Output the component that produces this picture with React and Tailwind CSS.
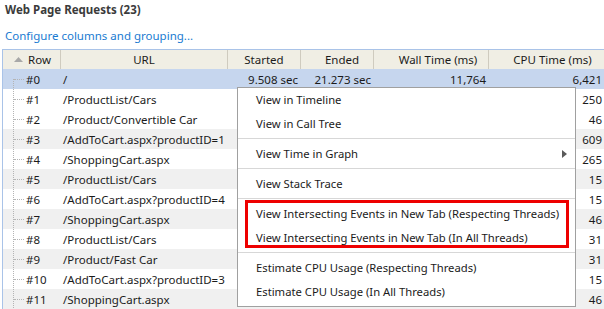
import React from "react";

const rows = [
  { n: "#0", url: "/", started: "9.508 sec", ended: "21.273 sec", wall: "11,764", cpu: "6,421" },
  { n: "#1", url: "/ProductList/Cars", cpu: "250" },
  { n: "#2", url: "/Product/Convertible Car", cpu: "46" },
  { n: "#3", url: "/AddToCart.aspx?productID=1", cpu: "609" },
  { n: "#4", url: "/ShoppingCart.aspx", cpu: "265" },
  { n: "#5", url: "/ProductList/Cars", cpu: "15" },
  { n: "#6", url: "/AddToCart.aspx?productID=4", cpu: "15" },
  { n: "#7", url: "/ShoppingCart.aspx", cpu: "46" },
  { n: "#8", url: "/ProductList/Cars", cpu: "31" },
  { n: "#9", url: "/Product/Fast Car", cpu: "31" },
  { n: "#10", url: "/AddToCart.aspx?productID=3", cpu: "15" },
  { n: "#11", url: "/ShoppingCart.aspx", cpu: "46" },
];

const cols = "grid grid-cols-[58px_167px_73px_73px_115px_115px]";

function MenuItem({ children, arrow }) {
  return (
    <div className="h-[24px] flex items-center pl-[18px] pr-[10px] relative whitespace-nowrap">
      <span>{children}</span>
      {arrow && (
        <svg className="absolute left-[324px] top-[8px]" width="5" height="8" viewBox="0 0 5 8">
          <path d="M0 0 L5 4 L0 8 Z" fill="#5a5a5a" />
        </svg>
      )}
    </div>
  );
}

function Sep() {
  return <div className="h-[6px] pt-[2px]"><div className="h-px bg-[#d7d7d7]" /></div>;
}

export default function App() {
  return (
    <div
      className="relative w-[604px] h-[309px] overflow-hidden bg-white text-[11.5px] text-[#1b1b1b]"
      style={{ fontFamily: '"Segoe UI", "Noto Sans", sans-serif' }}
    >
      <div className="h-[20px] leading-[20px] pl-[5px] font-bold text-[#3b3b3b]">Web Page Requests (23)</div>
      <div className="mt-[6px] h-[20px] leading-[20px] pl-[5px] text-[#1a7bd1]">Configure columns and grouping...</div>
      <div className="mt-[3px] ml-[2px] border-l border-t border-[#a9c3e8]">
        <div className={`${cols} h-[19px] bg-[#f0eee4] leading-[19px]`}>
          <div className="border-r border-[#cfcbbf] flex items-center pl-[11px]">
            <svg width="9" height="5" viewBox="0 0 9 5" className="mr-[5px]">
              <path d="M0 5 L4.5 0 L9 5 Z" fill="#a8a8a8" />
            </svg>
            <span>Row</span>
          </div>
          <div className="border-r border-[#cfcbbf] text-center">URL</div>
          <div className="border-r border-[#cfcbbf] text-center">Started</div>
          <div className="border-r border-[#cfcbbf] text-center pl-[10px]">Ended</div>
          <div className="border-r border-[#cfcbbf] text-center pl-[14px]">Wall Time (ms)</div>
          <div className="text-center pl-[12px]">CPU Time (ms)</div>
        </div>
        {rows.map((r, i) => {
          const bg = i === 0 ? "bg-[#c6d6ee]" : i % 2 === 1 && i > 1 ? "bg-[#f0f0f0]" : "bg-white";
          return (
            <div key={r.n} className={`${cols} h-[20px] leading-[21px] ${bg}`}>
              <div className="relative pl-[23px]">
                <span
                  className={`absolute left-[10px] ${i === 0 ? "top-[10px]" : "top-0"} bottom-0 border-l border-dotted border-[#b4b4b4]`}
                />
                <span className="absolute left-[11px] top-[10px] w-[10px] border-t border-dotted border-[#b4b4b4]" />
                {r.n}
              </div>
              <div className="pl-[2px] whitespace-nowrap">{r.url}</div>
              <div className="text-right pr-[3px] whitespace-nowrap">{r.started || ""}</div>
              <div className="text-right pr-[3px] whitespace-nowrap">{r.ended || ""}</div>
              <div className="text-right pr-[3px]">{r.wall || ""}</div>
              <div className="text-right pr-[2px]">{r.cpu}</div>
            </div>
          );
        })}
      </div>

      <div className="absolute left-[237px] top-[87px] w-[339px] h-[220px] bg-white border border-[#a0a0a0] pb-[2px] text-[11.25px] text-[#1b1b1b]">
        <MenuItem>View in Timeline</MenuItem>
        <MenuItem>View in Call Tree</MenuItem>
        <Sep />
        <MenuItem arrow>View Time in Graph</MenuItem>
        <Sep />
        <MenuItem>View Stack Trace</MenuItem>
        <Sep />
        <MenuItem>View Intersecting Events in New Tab (Respecting Threads)</MenuItem>
        <MenuItem>View Intersecting Events in New Tab (In All Threads)</MenuItem>
        <Sep />
        <MenuItem>Estimate CPU Usage (Respecting Threads)</MenuItem>
        <MenuItem>Estimate CPU Usage (In All Threads)</MenuItem>
        <div className="absolute left-[7px] top-[112px] w-[324px] h-[48px] border-[3px] border-[#ee0000]" />
      </div>
    </div>
  );
}
